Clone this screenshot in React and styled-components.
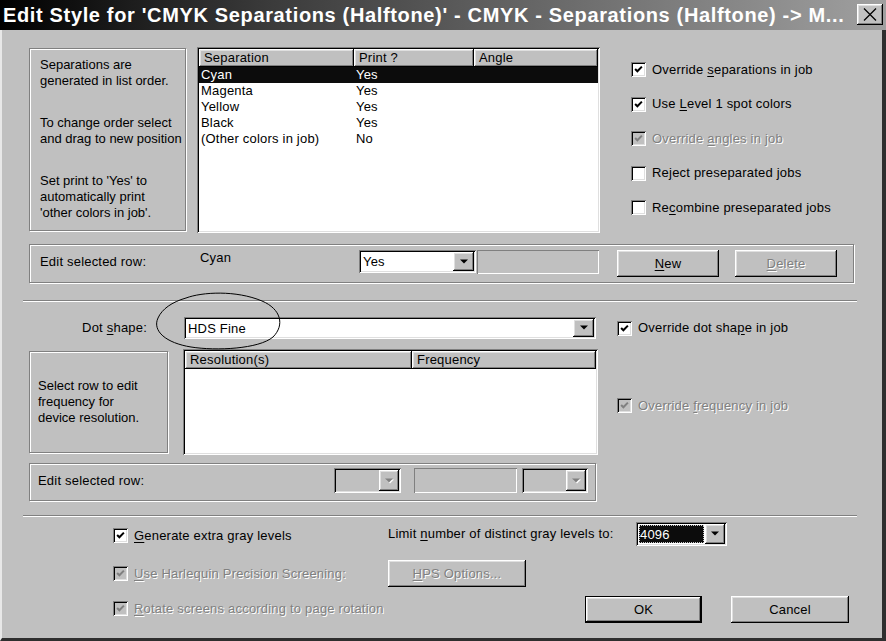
import React from 'react';
import styled, { createGlobalStyle, css } from 'styled-components';

const GlobalStyle = createGlobalStyle`
  html, body { margin: 0; padding: 0; background: #c0c0c0; }
  body { font-family: "Liberation Sans", Arial, sans-serif; font-size: 13px; color: #000; }
  u { text-decoration: underline; text-underline-offset: 2px; }
`;

const sunken = css`
  box-shadow: inset 1px 1px 0 #808080, inset -1px -1px 0 #fff, inset 2px 2px 0 #000, inset -2px -2px 0 #dfdfdf;
`;
const raised = css`
  box-shadow: inset -1px -1px 0 #000, inset 1px 1px 0 #fff, inset -2px -2px 0 #808080, inset 2px 2px 0 #dfdfdf;
`;
const etched = css`
  border: 1px solid #808080;
  box-shadow: inset 1px 1px 0 #fff, 1px 1px 0 #fff;
`;
const disabledText = css`
  color: #808080;
  text-shadow: 1px 1px 0 #fff;
`;

const Window = styled.div`
  position: relative;
  width: 886px;
  height: 641px;
  background: #c0c0c0;
  display: flex;
  flex-direction: column;
  overflow: hidden;
  letter-spacing: 0.2px;
`;

const TitleBar = styled.div`
  height: 30px;
  flex: none;
  background: linear-gradient(to right, #000 0%, #3a3a3a 30%, #a0a0a0 100%);
  display: flex;
  align-items: center;
  justify-content: space-between;
  padding: 0 3px 0 3px;
  box-sizing: border-box;
`;

const TitleText = styled.div`
  color: #fff;
  font-weight: bold;
  font-size: 20px;
  white-space: nowrap;
  letter-spacing: 0.65px;
  margin-top: 1px;
`;

const CloseButton = styled.div`
  width: 26px;
  height: 21px;
  margin-top: -1px;
  background: #c0c0c0;
  ${raised};
  display: flex;
  align-items: center;
  justify-content: center;
`;

const Body = styled.div`
  flex: 1;
  border-left: 2px solid #e8e8e8;
  border-right: 4px solid #2e2e2e;
  border-bottom: 3px solid #2e2e2e;
  padding: 17px 0 0 27px;
  display: flex;
  flex-direction: column;
`;

const Row = styled.div`
  display: flex;
  align-items: ${p => p.$align || 'flex-start'};
  margin-top: ${p => p.$mt || 0}px;
  height: ${p => (p.$h ? `${p.$h}px` : 'auto')};
`;

const InfoBox = styled.div`
  ${etched};
  box-sizing: border-box;
  width: ${p => p.$w}px;
  height: ${p => p.$h}px;
  margin-top: ${p => p.$mt || 0}px;
  padding: ${p => p.$pad};
  display: flex;
  flex-direction: column;
  justify-content: ${p => (p.$center ? 'center' : 'flex-start')};
  gap: ${p => p.$gap || 0}px;
  line-height: 16px;
  letter-spacing: 0;
`;

const Para = styled.div`
  white-space: pre;
`;

const ListBox = styled.div`
  ${sunken};
  background: #fff;
  box-sizing: border-box;
  padding: 2px;
  width: ${p => p.$w}px;
  height: ${p => p.$h}px;
  margin-left: ${p => p.$ml || 0}px;
  display: flex;
  flex-direction: column;
  overflow: hidden;
`;

const HeaderRow = styled.div`
  display: flex;
  height: 18px;
  flex: none;
`;

const HeaderCell = styled.div`
  ${raised};
  background: #c0c0c0;
  box-sizing: border-box;
  width: ${p => (p.$w ? `${p.$w}px` : 'auto')};
  flex: ${p => (p.$w ? 'none' : '1')};
  padding-left: 5px;
  line-height: 18px;
  white-space: nowrap;
`;

const ListRow = styled.div`
  display: flex;
  height: 16px;
  line-height: 16px;
  background: ${p => (p.$sel ? '#0c0c0c' : 'transparent')};
  color: ${p => (p.$sel ? '#fff' : '#000')};
`;

const ListCell = styled.div`
  width: ${p => p.$w}px;
  box-sizing: border-box;
  padding-left: 2px;
  white-space: nowrap;
`;

const CheckCol = styled.div`
  display: flex;
  flex-direction: column;
  gap: 19.5px;
  margin-left: ${p => p.$ml || 0}px;
  margin-top: ${p => p.$mt || 0}px;
`;

const CheckRow = styled.div`
  display: flex;
  align-items: center;
  height: 15px;
  width: ${p => (p.$w ? `${p.$w}px` : 'auto')};
  flex: none;
  margin-left: ${p => p.$ml || 0}px;
  margin-top: ${p => p.$mt || 0}px;
`;

const CheckBox = styled.div`
  width: 15px;
  height: 15px;
  flex: none;
  box-sizing: border-box;
  background: ${p => (p.$disabled ? '#c0c0c0' : '#fff')};
  ${sunken};
  display: flex;
  align-items: center;
  justify-content: center;
`;

const CheckLabel = styled.span`
  margin-left: 6px;
  white-space: nowrap;
  line-height: 16px;
  ${p => p.$disabled && disabledText};
`;

const GroupBox = styled.div`
  ${etched};
  box-sizing: border-box;
  width: ${p => p.$w}px;
  height: ${p => p.$h}px;
  margin-top: ${p => p.$mt || 0}px;
  padding: ${p => p.$pad};
  display: flex;
  align-items: flex-start;
`;

const Label = styled.div`
  width: ${p => (p.$w ? `${p.$w}px` : 'auto')};
  flex: none;
  margin-top: ${p => p.$mt || 0}px;
  text-align: ${p => (p.$right ? 'right' : 'left')};
  line-height: 16px;
  white-space: nowrap;
`;

const ComboField = styled.div`
  ${sunken};
  box-sizing: border-box;
  width: ${p => p.$w}px;
  height: ${p => p.$h}px;
  margin-left: ${p => p.$ml || 0}px;
  padding: 2px;
  background: ${p => (p.$disabled ? '#c0c0c0' : '#fff')};
  display: flex;
  align-items: stretch;
  flex: none;
`;

const ComboText = styled.div`
  flex: 1;
  display: flex;
  align-items: center;
  padding-left: ${p => p.$pl ?? 2}px;
  white-space: nowrap;
`;

const Highlight = styled.div`
  flex: 1;
  margin: 1px;
  background: #0c0c0c;
  color: #fff;
  outline: 1px dotted #c8c8c8;
  outline-offset: -1px;
  display: flex;
  align-items: center;
  padding-left: 1px;
`;

const DropBtn = styled.div`
  width: ${p => p.$bw || 20}px;
  flex: none;
  background: #c0c0c0;
  ${raised};
  display: flex;
  align-items: center;
  justify-content: center;
`;

const PlainField = styled.div`
  box-sizing: border-box;
  width: ${p => p.$w}px;
  height: ${p => p.$h}px;
  margin-left: ${p => p.$ml || 0}px;
  box-shadow: inset 1px 1px 0 #808080, inset -1px -1px 0 #fff;
  flex: none;
`;

const Button = styled.div`
  box-sizing: border-box;
  width: ${p => p.$w}px;
  height: ${p => p.$h || 27}px;
  margin-left: ${p => p.$ml || 0}px;
  background: #c0c0c0;
  ${raised};
  ${p => p.$default && css`
    box-shadow: inset 0 0 0 1px #000, inset -2px -2px 0 #000, inset 2px 2px 0 #fff, inset -3px -3px 0 #808080, inset 3px 3px 0 #dfdfdf;
  `};
  display: flex;
  align-items: center;
  justify-content: center;
  flex: none;
  white-space: nowrap;
  ${p => p.$disabled && disabledText};
`;

const Separator = styled.div`
  margin-top: ${p => p.$mt || 0}px;
  margin-left: -6px;
  width: 834px;
  border-top: 1px solid #808080;
  border-bottom: 1px solid #fff;
  flex: none;
`;

const Annotation = styled.svg`
  position: absolute;
  left: 0;
  top: 0;
  pointer-events: none;
`;

const Arrow = ({ disabled }) => (
  <svg width="10" height="6" viewBox="0 0 10 6">
    {disabled && <polygon points="2,1.5 10,1.5 6,5.5" fill="#fff" />}
    <polygon points="1,0.5 9,0.5 5,4.5" fill={disabled ? '#808080' : '#000'} />
  </svg>
);

const Check = ({ checked, disabled, children, ...rest }) => (
  <CheckRow {...rest}>
    <CheckBox $disabled={disabled}>
      {checked && (
        <svg width="9" height="9" viewBox="0 0 8 8">
          <path d="M1 3.6 L3 5.6 L7 1.4" fill="none" stroke={disabled ? '#808080' : '#000'} strokeWidth="1.8" />
        </svg>
      )}
    </CheckBox>
    <CheckLabel $disabled={disabled}>{children}</CheckLabel>
  </CheckRow>
);

const Combo = ({ w, h, ml, disabled, bw, children, pl }) => (
  <ComboField $w={w} $h={h} $ml={ml} $disabled={disabled}>
    <ComboText $pl={pl}>{children}</ComboText>
    <DropBtn $bw={bw}><Arrow disabled={disabled} /></DropBtn>
  </ComboField>
);

const separations = [
  ['Cyan', 'Yes'],
  ['Magenta', 'Yes'],
  ['Yellow', 'Yes'],
  ['Black', 'Yes'],
  ['(Other colors in job)', 'No'],
];

export default function App() {
  return (
    <>
      <GlobalStyle />
      <Window>
        <TitleBar>
          <TitleText>Edit Style for 'CMYK Separations (Halftone)' - CMYK - Separations (Halftone) -&gt; M...</TitleText>
          <CloseButton>
            <svg width="14" height="13" viewBox="0 0 14 13">
              <path d="M1 0.5 L13 12.5 M13 0.5 L1 12.5" stroke="#000" strokeWidth="1.3" />
            </svg>
          </CloseButton>
        </TitleBar>
        <Body>
          <Row>
            <InfoBox $w={157} $h={183} $mt={1} $pad="8px 0 0 10px" $gap={26}>
              <Para>{'Separations are\ngenerated in list order.'}</Para>
              <Para>{'To change order select\nand drag to new position'}</Para>
              <Para>{"Set print to 'Yes' to\nautomatically print\n'other colors in job'."}</Para>
            </InfoBox>
            <ListBox $w={403} $h={186} $ml={11}>
              <HeaderRow>
                <HeaderCell $w={155}>Separation</HeaderCell>
                <HeaderCell $w={120}>Print ?</HeaderCell>
                <HeaderCell>Angle</HeaderCell>
              </HeaderRow>
              {separations.map(([name, print], i) => (
                <ListRow key={name} $sel={i === 0}>
                  <ListCell $w={155}>{name}</ListCell>
                  <ListCell $w={120}>{print}</ListCell>
                </ListRow>
              ))}
            </ListBox>
            <CheckCol $ml={31} $mt={15}>
              <Check checked>Override <u>s</u>eparations in job</Check>
              <Check checked>Use <u>L</u>evel 1 spot colors</Check>
              <Check checked disabled>Override <u>a</u>ngles in job</Check>
              <Check>Re<u>j</u>ect preseparated jobs</Check>
              <Check>Re<u>c</u>ombine preseparated jobs</Check>
            </CheckCol>
          </Row>

          <GroupBox $w={825} $h={39} $mt={11} $pad="5px 0 0 10px">
            <Label $w={160} $mt={4}>Edit selected row:</Label>
            <Label $w={159} $mt={0}>Cyan</Label>
            <Combo w={117} h={23} bw={21}>Yes</Combo>
            <PlainField $w={122} $h={24} $ml={1} />
            <Button $w={102} $ml={18}><span><u>N</u>ew</span></Button>
            <Button $w={102} $ml={16} $disabled><span><u>D</u>elete</span></Button>
          </GroupBox>

          <Separator $mt={17} />

          <Row $mt={15} $align="center">
            <Label $w={118} $right>Dot <u>s</u>hape:</Label>
            <Combo w={412} h={22} ml={37} bw={21} pl={2}>HDS Fine</Combo>
            <Check checked $ml={21}>Override dot sha<u>p</u>e in job</Check>
          </Row>

          <Row $mt={10}>
            <InfoBox $w={139} $h={102} $mt={2} $pad="0 0 0 8px" $center>
              <Para>{'Select row to edit\nfrequency for\ndevice resolution.'}</Para>
            </InfoBox>
            <ListBox $w={415} $h={106} $ml={15}>
              <HeaderRow>
                <HeaderCell $w={227}>Resolution(s)</HeaderCell>
                <HeaderCell>Frequency</HeaderCell>
              </HeaderRow>
            </ListBox>
            <Check checked disabled $ml={19} $mt={49}>Override <u>f</u>requency in job</Check>
          </Row>

          <GroupBox $w={567} $h={38} $mt={8} $pad="4px 0 0 8px">
            <Label $w={296} $mt={5}>Edit selected row:</Label>
            <Combo w={67} h={25} disabled bw={20} />
            <PlainField $w={103} $h={25} $ml={13} />
            <Combo w={66} h={25} ml={5} disabled bw={20} />
          </GroupBox>

          <Separator $mt={14} />

          <Row $mt={5} $h={24} $align="center">
            <Check checked $w={275} $ml={84} $mt={3}><u>G</u>enerate extra gray levels</Check>
            <Label $w={248}>Limit <u>n</u>umber of distinct gray levels to:</Label>
            <ComboField $w={91} $h={24}>
              <Highlight>4096</Highlight>
              <DropBtn $bw={20}><Arrow /></DropBtn>
            </ComboField>
          </Row>

          <Row $mt={14} $h={27} $align="center">
            <Check checked disabled $w={275} $ml={84}><u>U</u>se Harlequin Precision Screening:</Check>
            <Button $w={138} $disabled><span><u>H</u>PS Options...</span></Button>
          </Row>

          <Row $mt={9} $h={27} $align="center">
            <Check checked disabled $w={197 + 275} $ml={84} $mt={-2}><u>R</u>otate screens according to page rotation</Check>
            <Button $w={117} $default>OK</Button>
            <Button $w={118} $ml={29}>Cancel</Button>
          </Row>
        </Body>
        <Annotation width="886" height="641" viewBox="0 0 886 641">
          <path
            d="M 186 298 C 202 292, 236 290, 262 301 C 281 309, 285 325, 273 337 C 259 349, 216 351, 191 347 C 166 343, 152 331, 158 318 C 162 309, 172 302, 186 298"
            fill="none"
            stroke="#000"
            strokeWidth="1"
          />
        </Annotation>
      </Window>
    </>
  );
}
